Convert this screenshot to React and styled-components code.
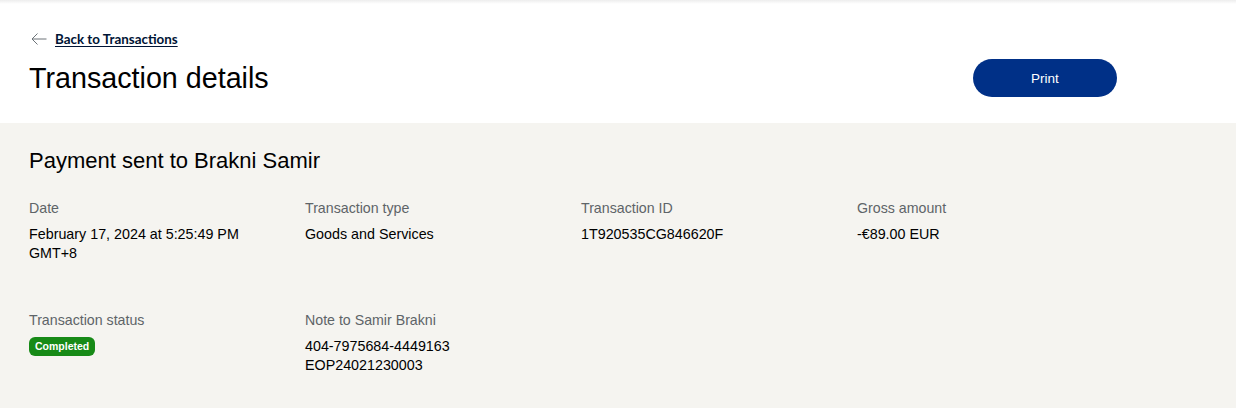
import React from "react";
import styled, { createGlobalStyle } from "styled-components";

const Global = createGlobalStyle`
  html, body { margin: 0; padding: 0; background: #ffffff; }
  body { font-family: "Liberation Sans", Arial, sans-serif; color: #000; }
  * { box-sizing: border-box; }
`;

const Page = styled.div`
  width: 1236px;
  min-height: 408px;
  display: flex;
  flex-direction: column;
  background: #f5f4f0;
`;

const TopShade = styled.div`
  height: 4px;
  background: linear-gradient(#ededed, #ffffff);
`;

const Header = styled.header`
  background: #ffffff;
  padding: 27px 119px 26px 29px;
  display: flex;
  flex-direction: column;
  gap: 12px;
`;

const BackLink = styled.a`
  display: flex;
  align-items: center;
  gap: 8px;
  height: 16px;
  padding-left: 2px;
  font-family: Lato, "Open Sans", sans-serif;
  font-weight: 700;
  font-size: 13.4px;
  color: #001435;
  text-decoration: none;
  cursor: pointer;
  span {
    text-decoration: underline;
    text-underline-offset: 2px;
  }
`;

const TitleRow = styled.div`
  display: flex;
  align-items: center;
  justify-content: space-between;
  height: 38px;
`;

const Title = styled.h1`
  margin: 0;
  font-size: 28.7px;
  line-height: 32px;
  font-weight: 400;
  color: #000;
`;

const PrintButton = styled.button`
  width: 144px;
  height: 38px;
  border: none;
  border-radius: 19px;
  background: #003087;
  color: #ffffff;
  font-family: "Liberation Sans", Arial, sans-serif;
  font-size: 13.5px;
  cursor: pointer;
`;

const Details = styled.section`
  background: #f5f4f0;
  padding: 25px 29px 30px;
  flex: 1;
`;

const Heading = styled.h2`
  margin: 0 0 24px;
  font-size: 22px;
  line-height: 26px;
  font-weight: 400;
  color: #000;
`;

const Grid = styled.div`
  display: grid;
  grid-template-columns: repeat(4, 260px);
  column-gap: 16px;
  row-gap: 48px;
`;

const Field = styled.div`
  display: flex;
  flex-direction: column;
  gap: 7px;
`;

const Label = styled.div`
  font-size: 14.2px;
  line-height: 20px;
  color: #5e6468;
`;

const Value = styled.div`
  font-size: 14.3px;
  line-height: 18.6px;
  color: #000;
`;

const Badge = styled.span`
  align-self: flex-start;
  height: 19px;
  padding: 0 6px;
  border-radius: 6px;
  background: #178a17;
  color: #ffffff;
  font-size: 10.5px;
  font-weight: 700;
  line-height: 19px;
`;

const ArrowLeft = () => (
  <svg width="16" height="12" viewBox="0 0 16 12" fill="none">
    <path d="M15.5 6H1M6.5 0.5L1 6l5.5 5.5" stroke="#6c7378" strokeWidth="1" />
  </svg>
);

const rows = [
  { label: "Date", value: ["February 17, 2024 at 5:25:49 PM", "GMT+8"] },
  { label: "Transaction type", value: ["Goods and Services"] },
  { label: "Transaction ID", value: ["1T920535CG846620F"] },
  { label: "Gross amount", value: ["-€89.00 EUR"] },
];

export default function App() {
  return (
    <>
      <Global />
      <Page>
        <TopShade />
        <Header>
          <BackLink>
            <ArrowLeft />
            <span>Back to Transactions</span>
          </BackLink>
          <TitleRow>
            <Title>Transaction details</Title>
            <PrintButton>Print</PrintButton>
          </TitleRow>
        </Header>
        <Details>
          <Heading>Payment sent to Brakni Samir</Heading>
          <Grid>
            {rows.map((r) => (
              <Field key={r.label}>
                <Label>{r.label}</Label>
                <Value>
                  {r.value.map((v, i) => (
                    <div key={i}>{v}</div>
                  ))}
                </Value>
              </Field>
            ))}
            <Field>
              <Label>Transaction status</Label>
              <Badge>Completed</Badge>
            </Field>
            <Field>
              <Label>Note to Samir Brakni</Label>
              <Value>
                <div>404-7975684-4449163</div>
                <div>EOP24021230003</div>
              </Value>
            </Field>
          </Grid>
        </Details>
      </Page>
    </>
  );
}
